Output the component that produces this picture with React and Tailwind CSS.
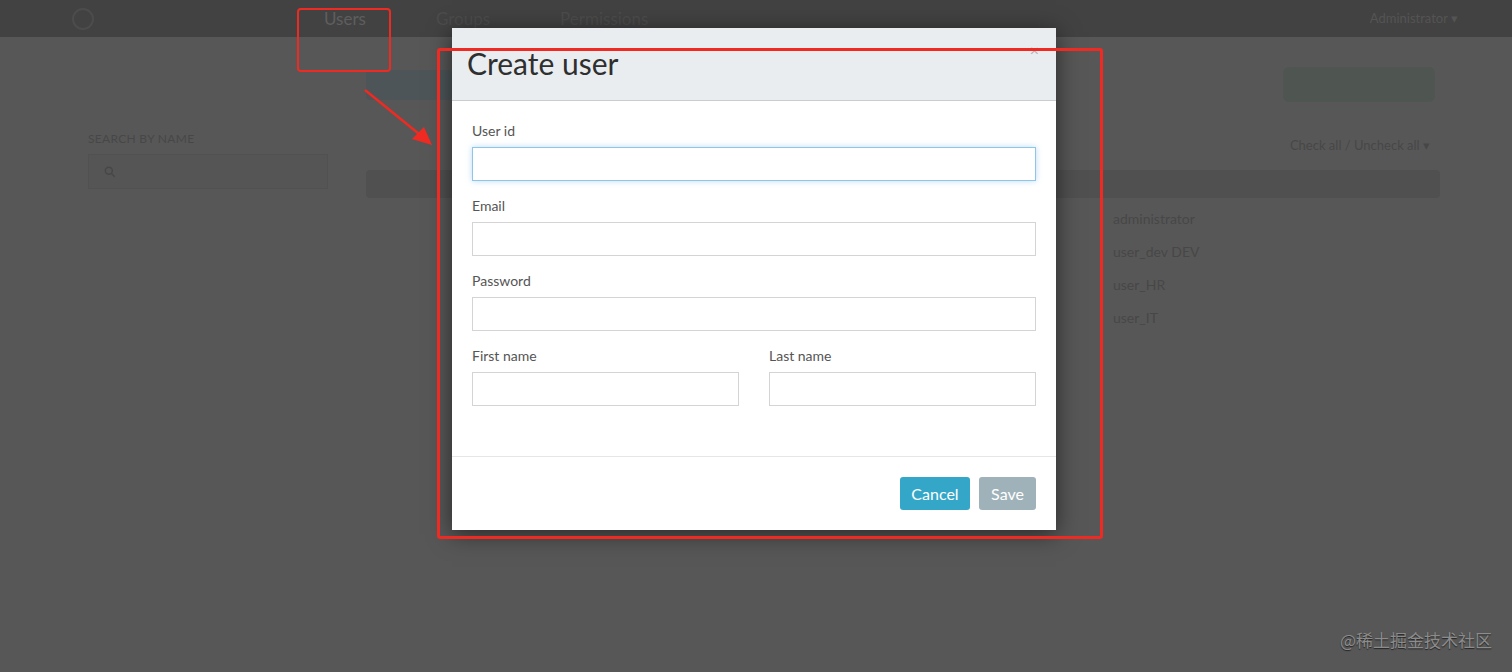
import React from 'react';

const users = ['administrator', 'user_dev DEV', 'user_HR', 'user_IT'];

function Field({ label, focused, className = '' }) {
  return (
    <div className={`mb-[15px] ${className}`}>
      <label className="block text-[14px] leading-[20px] text-[#555] mb-[6px]">{label}</label>
      <input
        className={`block w-full h-[34px] px-3 bg-white outline-none border ${
          focused
            ? 'border-[#8fc6e8] shadow-[0_0_6px_rgba(102,175,233,0.45)]'
            : 'border-[#d4d4d4]'
        }`}
      />
    </div>
  );
}

export default function App() {
  return (
    <div
      className="relative h-[672px] w-full overflow-hidden bg-[#575757]"
      style={{ fontFamily: 'Lato, "Open Sans", sans-serif' }}
    >
      {/* dimmed page behind the dialog */}
      <header className="h-[37px] bg-[#424242] flex items-center pl-[72px] pr-[54px]">
        <div className="w-[22px] h-[22px] rounded-full border-2 border-[#4c4c4c]" />
        <nav className="ml-[230px] flex items-center gap-[70px] text-[17px] text-[#5e5e5e]">
          <span className="relative">
            Users
            <span className="absolute left-1/2 -translate-x-1/2 top-[25px] w-0 h-0 border-x-[6px] border-x-transparent border-t-[6px] border-t-[#424242]" />
          </span>
          <span className="text-[#4c4c4c]">Groups</span>
          <span className="text-[#4c4c4c]">Permissions</span>
        </nav>
        <span className="ml-auto text-[13px] text-[#545454]">Administrator ▾</span>
      </header>

      <main className="flex pl-[88px] pr-[72px]">
        <aside className="w-[278px] pt-[93px]">
          <div className="text-[12px] tracking-wide text-[#474747] uppercase">Search by name</div>
          <div className="mt-[6px] h-[35px] w-[240px] bg-[#555] border border-[#515151] flex items-center pl-[14px]">
            <svg width="14" height="14" viewBox="0 0 24 24" fill="none" stroke="#474747" strokeWidth="2.5">
              <circle cx="10" cy="10" r="6" />
              <path d="M15 15l5 5" />
            </svg>
          </div>
        </aside>

        <section className="flex-1 pt-[30px]">
          <div className="flex items-center justify-between">
            <div className="h-[30px] w-[86px] rounded-sm bg-[#4d5558]" />
            <div className="h-[35px] w-[152px] rounded-md bg-[#4f5550] mr-[5px]" />
          </div>
          <div className="mt-[34px] flex justify-end pr-[10px] text-[13px] text-[#474747]">
            Check all / Uncheck all ▾
          </div>
          <div className="mt-[14px] h-[28px] bg-[#505050] rounded-sm" />
          <div className="pl-[747px] pt-[4px]">
            {users.map((u) => (
              <div key={u} className="h-[33px] flex items-center text-[14px] text-[#474747]">
                {u}
              </div>
            ))}
          </div>
        </section>
      </main>

      {/* dialog */}
      <div className="absolute inset-0 flex justify-center pt-[28px]">
        <div className="w-[604px] h-[502px] bg-white shadow-[0_4px_22px_rgba(0,0,0,0.55)] flex flex-col mr-[4px]">
          <div className="h-[73px] bg-[#e9edf0] border-b border-[#c9cdd0] flex items-center pl-[15px] pr-[18px] relative">
            <h1 className="text-[30px] leading-none text-[#2f2f2f] pb-[2px]">Create user</h1>
            <span className="absolute right-[17px] top-[14px] text-[16px] leading-none text-[#b0b4b7]">×</span>
          </div>
          <div className="flex-1 pt-[20px] px-[20px]">
            <Field label="User id" focused />
            <Field label="Email" />
            <Field label="Password" />
            <div className="flex gap-[30px]">
              <Field label="First name" className="flex-1" />
              <Field label="Last name" className="flex-1" />
            </div>
          </div>
          <div className="h-[74px] border-t border-[#e6e6e6] flex items-center justify-end gap-[9px] px-[20px]">
            <button className="h-[33px] w-[70px] rounded-[3px] bg-[#34a7c9] text-white text-[16px]">Cancel</button>
            <button className="h-[33px] w-[57px] rounded-[3px] bg-[#9fb2ba] text-white text-[16px]">Save</button>
          </div>
        </div>
      </div>

      {/* red annotations */}
      <div className="absolute left-[297px] top-[8px] w-[94px] h-[64px] border-2 border-[#ee2a22] rounded-[4px]" />
      <div className="absolute left-[437px] top-[48px] w-[666px] h-[491px] border-[3px] border-[#ee2a22] rounded-[3px]" />
      <svg className="absolute left-0 top-0" width="1512" height="672" pointerEvents="none">
        <line x1="365" y1="90" x2="424" y2="138" stroke="#ee2a22" strokeWidth="2.5" />
        <polygon points="432,145 412,139 424,127" fill="#ee2a22" />
      </svg>

      <div
        className="absolute right-[20px] bottom-[20px] text-[17px] text-[#8c8c8c] [text-shadow:0_1px_1px_rgba(0,0,0,0.6)]"
        style={{ fontFamily: '"Noto Sans CJK SC", sans-serif' }}
      >
        @稀土掘金技术社区
      </div>
    </div>
  );
}
